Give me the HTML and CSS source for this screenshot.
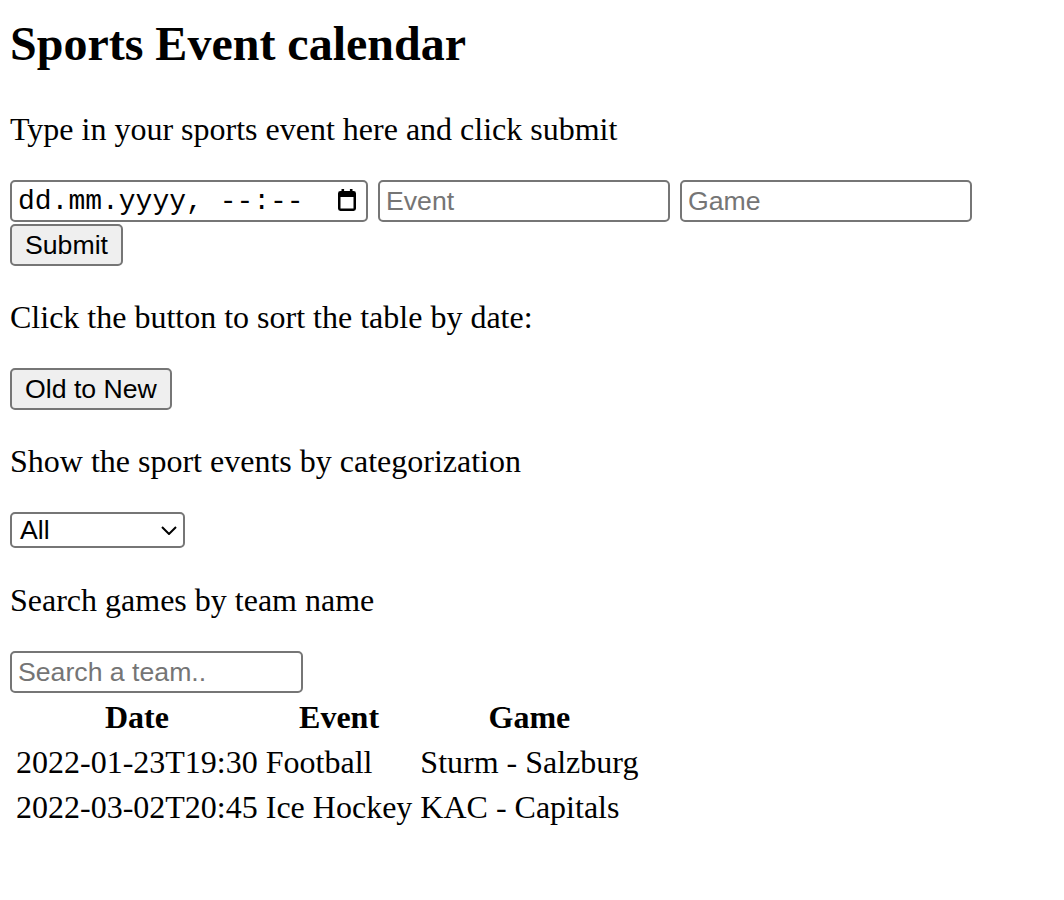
FILE: index.html
```html
<!DOCTYPE html>
<html lang="en">
<head>
<meta charset="utf-8">
<title>Sports Event calendar</title>
<link rel="stylesheet" href="styles.css">
</head>
<body>
<h1 class="title">Sports Event calendar</h1>
<p class="text">Type in your sports event here and click submit</p>
<form class="entry-form">
  <div class="date-field">
    <span class="date-text">dd.mm.yyyy, --:--</span>
    <svg class="cal-icon" width="18" height="23" viewBox="0 0 18 23" aria-hidden="true">
      <rect x="1.25" y="4.25" width="15.5" height="17.5" rx="1.2" fill="none" stroke="#000" stroke-width="2.5"/>
      <rect x="1" y="4" width="16" height="5" fill="#000"/>
      <rect x="3.5" y="1" width="2.6" height="4" fill="#000"/>
      <rect x="11.9" y="1" width="2.6" height="4" fill="#000"/>
    </svg>
  </div>
  <input class="field field-wide" type="text" placeholder="Event">
  <input class="field field-wide" type="text" placeholder="Game">
  <button class="btn" type="button">Submit</button>
</form>
<p class="text">Click the button to sort the table by date:</p>
<div class="control-row control-row-sort">
  <button class="btn" type="button">Old to New</button>
</div>
<p class="text">Show the sport events by categorization</p>
<div class="control-row control-row-filter">
  <div class="select-box">
    <span class="select-value">All</span>
    <svg class="chevron" width="16" height="9" viewBox="0 0 16 9" aria-hidden="true">
      <polyline points="1,1 8,8 15,1" fill="none" stroke="#000" stroke-width="2"/>
    </svg>
  </div>
</div>
<p class="text">Search games by team name</p>
<div class="control-row">
  <input class="field field-search" type="text" placeholder="Search a team..">
</div>
<table class="events">
  <thead>
    <tr><th>Date</th><th>Event</th><th>Game</th></tr>
  </thead>
  <tbody>
    <tr><td>2022-01-23T19:30</td><td>Football</td><td>Sturm - Salzburg</td></tr>
    <tr><td>2022-03-02T20:45</td><td>Ice Hockey</td><td>KAC - Capitals</td></tr>
  </tbody>
</table>
</body>
</html>
```
FILE: styles.css
```css
html, body {
  background: #fff;
}
body {
  margin: 0;
  padding: 16px 10px 0;
  font-family: "Liberation Serif", "Times New Roman", serif;
  font-size: 32px;
  color: #000;
}
.title {
  font-size: 48px;
  font-weight: bold;
  margin: 0 0 40px;
}
.text {
  margin: 32px 0;
}
.entry-form {
  display: flex;
  flex-wrap: wrap;
  column-gap: 10px;
  row-gap: 2px;
  margin: 0;
  padding-bottom: 1px;
}
.date-field {
  box-sizing: border-box;
  width: 358px;
  height: 42px;
  border: 2px solid #767676;
  border-radius: 5px;
  padding: 0 10px 0 6px;
  display: flex;
  align-items: center;
  justify-content: space-between;
  background: #fff;
}
.date-text {
  font-family: "Liberation Mono", "Courier New", monospace;
  font-size: 28px;
  color: #000;
}
.cal-icon {
  display: block;
  margin-top: -3px;
}
.field {
  box-sizing: border-box;
  height: 42px;
  border: 2px solid #767676;
  border-radius: 5px;
  padding: 2px 6px;
  font-family: "Liberation Sans", Arial, sans-serif;
  font-size: 26.67px;
  color: #000;
  background: #fff;
  margin: 0;
}
.field::placeholder {
  color: #757575;
}
.field-wide {
  width: 292px;
}
.field-search {
  width: 293px;
}
.btn {
  box-sizing: border-box;
  height: 42px;
  margin: 0;
  padding: 0 13px;
  border: 2px solid #767676;
  border-radius: 5px;
  background: #efefef;
  font-family: "Liberation Sans", Arial, sans-serif;
  font-size: 26.67px;
  color: #000;
}
.control-row {
  display: flex;
}
.control-row-sort {
  padding-bottom: 1px;
}
.control-row-filter {
  padding-bottom: 2px;
}
.select-box {
  box-sizing: border-box;
  width: 175px;
  height: 36px;
  border: 2px solid #767676;
  border-radius: 5px;
  padding: 0 8px;
  display: flex;
  align-items: center;
  justify-content: space-between;
  background: #fff;
  font-family: "Liberation Sans", Arial, sans-serif;
  font-size: 26.67px;
}
.chevron {
  display: block;
  margin-right: -2px;
}
.events {
  border-collapse: separate;
  border-spacing: 4px;
}
.events th,
.events td {
  padding: 2px;
}
.events th {
  font-weight: bold;
  text-align: center;
}
.events td {
  text-align: left;
}
```
